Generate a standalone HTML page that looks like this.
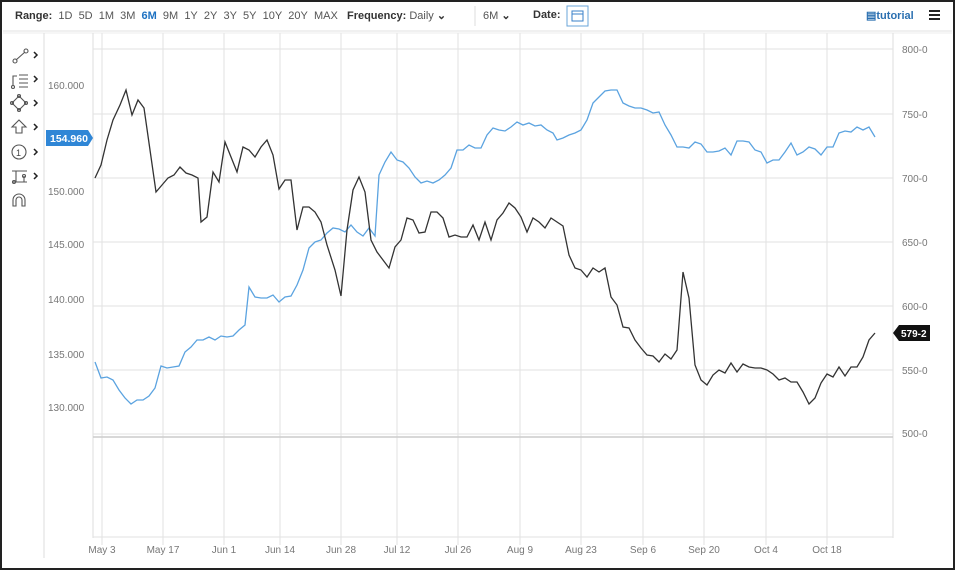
<!DOCTYPE html>
<html><head><style>
body{margin:0;width:955px;height:570px;overflow:hidden;background:#fff;font-family:"Liberation Sans",sans-serif;}
.frame{position:absolute;left:0;top:0;width:951px;height:566px;border:2px solid #222;}
.tb{position:absolute;top:9px;font-size:11px;color:#555;white-space:nowrap}
.tb b{color:#333}
svg{position:absolute;left:0;top:0}
</style></head><body>
<div class="frame"></div>
<div class="tb" style="left:15px"><b>Range:</b>&nbsp; 1D&nbsp; 5D&nbsp; 1M&nbsp; 3M&nbsp; <span style="color:#1e72c2;font-weight:bold">6M</span>&nbsp; 9M&nbsp; 1Y&nbsp; 2Y&nbsp; 3Y&nbsp; 5Y&nbsp; 10Y&nbsp; 20Y&nbsp; MAX&nbsp;&nbsp; <b>Frequency:</b> Daily <b>⌄</b></div>
<div class="tb" style="left:483px">6M <b>⌄</b></div>
<div class="tb" style="left:533px"><b>Date:</b></div>
<div class="tb" style="left:866px;color:#2a6fb0;font-weight:bold;font-size:11px">▤tutorial</div>
<svg width="955" height="570">
<line x1="475" y1="6" x2="475" y2="26" stroke="#ddd"/>
<rect x="567" y="6" width="21" height="20" fill="#fff" stroke="#6aa4d8"/>
<rect x="572" y="11" width="11" height="10" fill="none" stroke="#3a80c8"/>
<line x1="572" y1="14" x2="583" y2="14" stroke="#3a80c8"/>
<rect x="929" y="10" width="11" height="2" fill="#222"/><rect x="929" y="14" width="11" height="2" fill="#222"/><rect x="929" y="18" width="11" height="2" fill="#222"/>
<line x1="3" y1="31" x2="952" y2="31" stroke="#e0e0e0"/>
<line x1="3" y1="33" x2="952" y2="33" stroke="#ececec"/>
<line x1="44" y1="33" x2="44" y2="558" stroke="#ddd"/>
<line x1="93" y1="33" x2="93" y2="538" stroke="#ddd"/>
<line x1="893" y1="33" x2="893" y2="538" stroke="#ddd"/>
<g stroke="#e2e2e2">
<line x1="102" y1="33" x2="102" y2="545"/><line x1="163" y1="33" x2="163" y2="545"/><line x1="224" y1="33" x2="224" y2="545"/><line x1="280" y1="33" x2="280" y2="545"/><line x1="341" y1="33" x2="341" y2="545"/><line x1="397" y1="33" x2="397" y2="545"/><line x1="458" y1="33" x2="458" y2="545"/><line x1="520" y1="33" x2="520" y2="545"/><line x1="581" y1="33" x2="581" y2="545"/><line x1="643" y1="33" x2="643" y2="545"/><line x1="704" y1="33" x2="704" y2="545"/><line x1="766" y1="33" x2="766" y2="545"/><line x1="827" y1="33" x2="827" y2="545"/>
<line x1="93" y1="49" x2="893" y2="49"/><line x1="93" y1="114" x2="893" y2="114"/><line x1="93" y1="178" x2="893" y2="178"/><line x1="93" y1="242" x2="893" y2="242"/><line x1="93" y1="306" x2="893" y2="306"/><line x1="93" y1="370" x2="893" y2="370"/>
<line x1="93" y1="434" x2="893" y2="434"/><line x1="93" y1="537" x2="893" y2="537"/>
</g>
<line x1="93" y1="437" x2="893" y2="437" stroke="#ccc" stroke-width="1.5"/>
<g font-size="10" fill="#777">
<text x="48" y="89">160.000</text><text x="48" y="195">150.000</text><text x="48" y="248">145.000</text><text x="48" y="303">140.000</text><text x="48" y="358">135.000</text><text x="48" y="411">130.000</text>
<text x="902" y="53">800-0</text><text x="902" y="118">750-0</text><text x="902" y="182">700-0</text><text x="902" y="246">650-0</text><text x="902" y="310">600-0</text><text x="902" y="374">550-0</text><text x="902" y="437">500-0</text>
<g text-anchor="middle"><text x="102" y="553">May 3</text><text x="163" y="553">May 17</text><text x="224" y="553">Jun 1</text><text x="280" y="553">Jun 14</text><text x="341" y="553">Jun 28</text><text x="397" y="553">Jul 12</text><text x="458" y="553">Jul 26</text><text x="520" y="553">Aug 9</text><text x="581" y="553">Aug 23</text><text x="643" y="553">Sep 6</text><text x="704" y="553">Sep 20</text><text x="766" y="553">Oct 4</text><text x="827" y="553">Oct 18</text></g>
</g>
<polygon points="46,130 88,130 93,138 88,146 46,146" fill="#2f86d6"/>
<text x="50" y="142" font-size="10.5" font-weight="bold" fill="#fff">154.960</text>
<polygon points="893,333 899,325 930,325 930,341 899,341" fill="#111"/>
<text x="901" y="337" font-size="10" font-weight="bold" fill="#fff">579-2</text>
<polyline fill="none" stroke="#5ba3e0" stroke-width="1.3" points="95,362 101,378 107,377 113,380 119,390 125,398 131,404 137,400 143,400 149,396 155,388 161,366 167,368 173,367 179,366 185,352 191,347 197,340 203,340 209,337 215,340 221,336 227,337 233,336 239,330 245,325 249,287 255,297 261,298 267,298 273,295 279,302 285,297 291,296 297,285 303,270 309,248 315,242 321,240 327,233 333,228 339,229 345,232 351,225 357,232 363,236 369,228 375,236 379,175 385,162 391,152 397,160 403,162 409,168 415,177 421,183 427,181 433,183 439,180 445,175 451,168 457,150 463,150 469,145 475,148 481,148 487,135 493,128 499,130 505,131 511,127 517,122 523,125 529,123 535,126 541,125 547,130 553,133 557,140 563,138 569,135 575,133 581,130 587,120 593,103 599,97 605,91 611,90 617,90 623,103 629,106 635,108 641,108 647,110 653,113 659,112 665,125 671,135 677,147 683,147 689,148 695,142 701,144 707,152 713,152 719,151 725,148 731,155 737,141 743,141 749,142 755,150 761,152 767,163 773,160 779,160 785,152 791,143 797,155 803,152 809,147 815,149 821,155 827,147 833,147 839,133 845,131 851,132 857,127 863,130 869,127 875,137"/>
<polyline fill="none" stroke="#333" stroke-width="1.3" points="95,178 101,165 107,140 113,120 120,105 126,90 132,115 138,100 144,108 150,150 156,192 162,185 168,178 174,175 180,167 186,173 192,175 198,178 201,222 207,217 213,172 219,182 225,142 231,157 237,172 243,147 249,150 255,157 261,147 267,140 273,155 279,189 285,180 291,180 297,230 303,207 309,207 315,212 321,222 327,245 335,270 341,296 347,230 353,190 359,177 365,192 371,240 377,252 383,260 389,268 395,247 401,240 407,218 413,220 419,233 425,232 431,212 437,212 443,218 449,237 455,235 461,237 467,237 473,225 479,240 485,222 491,240 497,220 503,213 509,203 515,208 521,217 527,232 533,218 539,222 545,228 551,218 557,222 563,226 569,255 575,268 581,270 587,277 593,268 599,272 605,268 611,297 617,305 623,327 629,328 635,340 641,348 647,355 653,356 659,362 665,354 671,359 677,350 683,272 689,298 695,365 701,380 707,385 713,375 719,370 725,373 731,363 737,372 743,364 749,367 755,368 761,368 767,370 773,374 779,380 785,378 791,382 797,382 803,392 809,404 815,398 821,383 827,374 833,377 839,367 845,376 851,367 857,367 863,357 869,340 875,333"/>
<g stroke="#555" fill="none" stroke-width="1.1">
<circle cx="15" cy="61" r="2"/><circle cx="26" cy="51" r="2"/><line x1="16" y1="60" x2="25" y2="52"/>
<path d="M34 52l3 3-3 3M34 76l3 3-3 3M34 100l3 3-3 3M34 124l3 3-3 3M34 149l3 3-3 3M34 173l3 3-3 3" stroke="#222" stroke-width="1.5"/>
<path d="M13 86 v-10 h4 M19 75h9M19 79h9M19 83h9M19 87h9"/><circle cx="13" cy="87" r="1.5"/>
<path d="M19 96 l7 7 -7 7 -7 -7z"/><circle cx="19" cy="96" r="1.5"/><circle cx="26" cy="103" r="1.5"/><circle cx="19" cy="110" r="1.5"/><circle cx="12" cy="103" r="1.5"/>
<path d="M19 120 l7 7 h-4 v6 h-6 v-6 h-4z"/>
<circle cx="19" cy="152" r="7"/>
<path d="M12 171h15M12 182h15M16 171v11M24 176v6"/><circle cx="14" cy="182" r="1.5"/><circle cx="24" cy="176" r="1.5"/>
<path d="M13 206 v-6 a6 6 0 0 1 12 0 v6 h-3 v-6 a3 3 0 0 0 -6 0 v6z"/>
</g>
<text x="16" y="156" font-size="9" fill="#444">1</text>
</svg>
</body></html>
